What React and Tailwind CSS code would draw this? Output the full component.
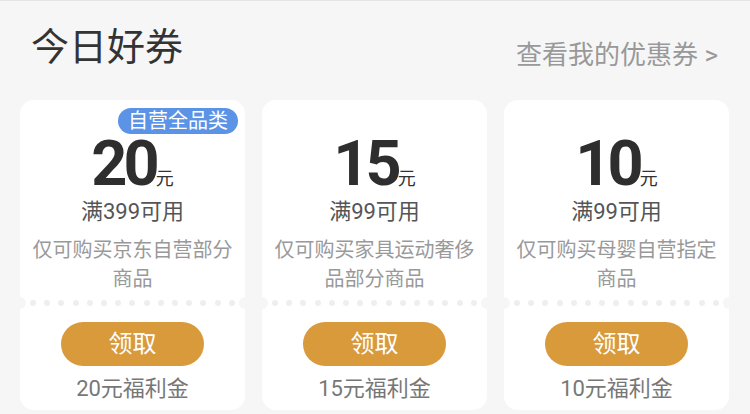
import React from "react";

const coupons = [
  { amount: "20", cond: "满399可用", desc: "仅可购买京东自营部分商品", bonus: "20元福利金", badge: "自营全品类" },
  { amount: "15", cond: "满99可用", desc: "仅可购买家具运动奢侈品部分商品", bonus: "15元福利金" },
  { amount: "10", cond: "满99可用", desc: "仅可购买母婴自营指定商品", bonus: "10元福利金" },
];

const FONT = "font-['Roboto','Noto_Sans_CJK_SC',sans-serif]";

function Card({ c }) {
  return (
    <div className={`relative w-[225px] h-[310px] bg-white rounded-[14px] flex flex-col items-center ${FONT}`}>
      {c.badge && (
        <div className="absolute top-[8px] right-[7px] h-[26px] px-[10px] rounded-full bg-[#5b93e7] text-white text-[20px] leading-[26px]">
          {c.badge}
        </div>
      )}
      <div className="pt-[32px] flex items-baseline justify-center leading-none text-[#2e2e2e]">
        <span className="text-[63px] font-bold tracking-[-4px] leading-none">{c.amount}</span>
        <span className="text-[18px] leading-none text-[#333]">元</span>
      </div>
      <div className="mt-[6px] text-[22px] leading-[22px] text-[#555]">{c.cond}</div>
      <div className="mt-[13px] w-[202px] h-[58px] text-center text-[20px] leading-[29px] text-[#999]">{c.desc}</div>
      <div className="relative mt-[3px] w-full h-[12px] flex items-center justify-between px-[10px]">
        <div className="absolute left-[-6px] top-0 w-[12px] h-[12px] rounded-full bg-[#f6f6f6]" />
        <div className="absolute right-[-6px] top-0 w-[12px] h-[12px] rounded-full bg-[#f6f6f6]" />
        {Array.from({ length: 15 }).map((_, i) => (
          <span key={i} className="w-[6px] h-[6px] rounded-full bg-[#eeeeee]" />
        ))}
      </div>
      <button className="mt-[13px] w-[143px] h-[44px] rounded-full bg-[#d99a3b] text-white text-[24px] leading-[44px]">
        领取
      </button>
      <div className="mt-[12px] text-[22px] leading-[22px] text-[#777]">{c.bonus}</div>
    </div>
  );
}

export default function App() {
  return (
    <div className={`w-[750px] h-[414px] bg-[#f6f6f6] border-t border-[#e4e4e4] overflow-hidden ${FONT}`}>
      <div className="h-[99px] flex justify-between items-start pl-[31px] pr-[32px]">
        <div className="pt-[24px] text-[38px] leading-none text-[#333] font-['Noto_Sans_CJK_SC',sans-serif]">今日好券</div>
        <div className="pt-[41px] text-[26px] leading-none text-[#999]">查看我的优惠券 &gt;</div>
      </div>
      <div className="flex gap-[17px] px-[20px]">
        {coupons.map((c, i) => (
          <Card key={i} c={c} />
        ))}
      </div>
    </div>
  );
}
